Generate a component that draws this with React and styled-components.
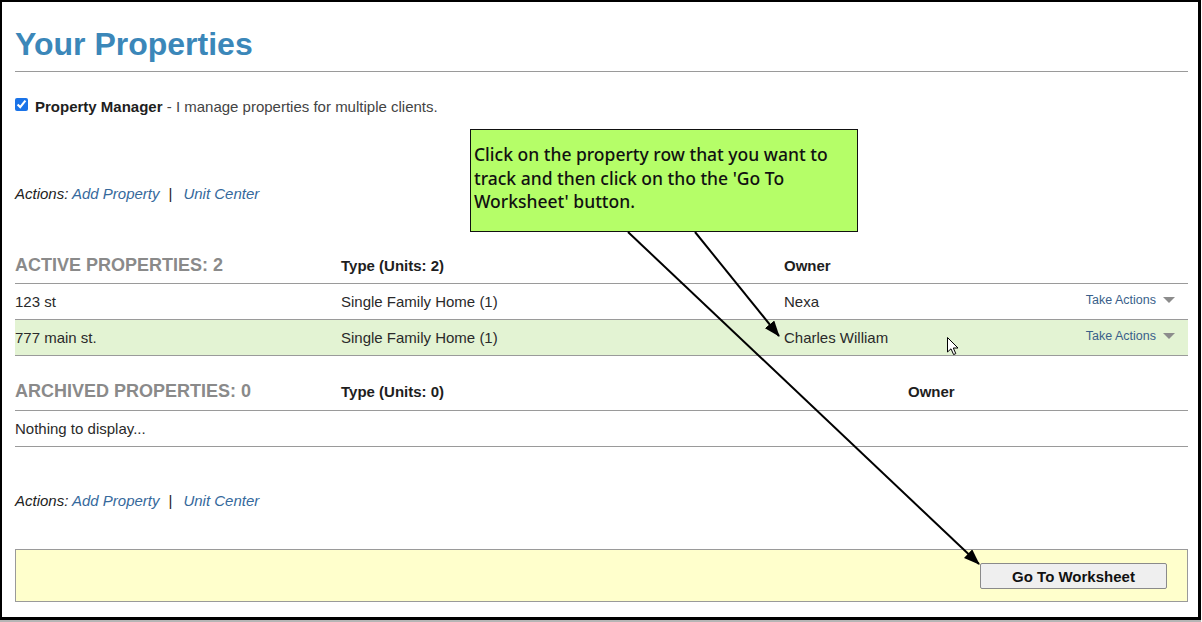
import React from "react";
import styled, { createGlobalStyle } from "styled-components";

const GlobalStyle = createGlobalStyle`
  html, body {
    margin: 0;
    padding: 0;
    background: #fff;
  }
  body {
    font-family: "Liberation Sans", Arial, sans-serif;
    color: #222;
  }
`;

const active = [
  { name: "123 st", type: "Single Family Home (1)", owner: "Nexa" },
  { name: "777 main st.", type: "Single Family Home (1)", owner: "Charles William", selected: true },
];

export default function App() {
  return (
    <Page>
      <GlobalStyle />
      <Frame>
        <Content>
          <Title>Your Properties</Title>
          <Rule />
          <ManagerRow>
            <Check type="checkbox" checked readOnly />
            <span>
              <b>Property Manager</b> - I manage properties for multiple clients.
            </span>
          </ManagerRow>
          <ActionsBar top={70}>
            <em>Actions:</em> <LinkText>Add Property</LinkText>
            <Pipe>|</Pipe>
            <LinkText>Unit Center</LinkText>
          </ActionsBar>

          <Section top={52}>
            <HeaderRow columns="326px 443px 1fr 110px" pad={6}>
              <SectionTitle>Active Properties: 2</SectionTitle>
              <ColHead>Type (Units: 2)</ColHead>
              <ColHead>Owner</ColHead>
              <span />
            </HeaderRow>
            {active.map((p) => (
              <Row key={p.name} columns="326px 443px 1fr 110px" selected={p.selected}>
                <span>{p.name}</span>
                <span>{p.type}</span>
                <span>{p.owner}</span>
                <TakeActions>
                  Take Actions <Caret />
                </TakeActions>
              </Row>
            ))}
          </Section>

          <Section top={24}>
            <HeaderRow columns="326px 567px 1fr" pad={7}>
              <SectionTitle>Archived Properties: 0</SectionTitle>
              <ColHead>Type (Units: 0)</ColHead>
              <ColHead>Owner</ColHead>
            </HeaderRow>
            <Row columns="1fr">
              <span>Nothing to display...</span>
            </Row>
          </Section>

          <ActionsBar top={45}>
            <em>Actions:</em> <LinkText>Add Property</LinkText>
            <Pipe>|</Pipe>
            <LinkText>Unit Center</LinkText>
          </ActionsBar>

          <Footer>
            <Button>Go To Worksheet</Button>
          </Footer>
        </Content>
      </Frame>

      <Callout>
        Click on the property row that you want to
        <br />
        track and then click on tho the 'Go To
        <br />
        Worksheet' button.
      </Callout>

      <Overlay width="1202" height="622" viewBox="0 0 1202 622">
        <defs>
          <marker id="head" markerWidth="8" markerHeight="6" refX="7.5" refY="3" orient="auto" markerUnits="strokeWidth">
            <path d="M0,0 L8,3 L0,6 Z" fill="#000" />
          </marker>
        </defs>
        <line x1="628" y1="232" x2="979" y2="564" stroke="#000" strokeWidth="2" markerEnd="url(#head)" />
        <line x1="695" y1="232" x2="779" y2="336" stroke="#000" strokeWidth="2" markerEnd="url(#head)" />
        <path
          d="M947.5 337.5 L947.5 352 L951 348.8 L953.6 354.6 L955.8 353.6 L953.3 348 L958 348 Z"
          fill="#fff"
          stroke="#000"
          strokeWidth="1"
          strokeLinejoin="round"
        />
      </Overlay>
    </Page>
  );
}

const Page = styled.div`
  position: relative;
  width: 1202px;
  height: 622px;
  overflow: hidden;
`;

const Frame = styled.div`
  box-sizing: border-box;
  width: 1201px;
  height: 620px;
  border-style: solid;
  border-color: #000;
  border-width: 2px 3px 3px 2px;
  box-shadow: 0 2px 0 #b5b5b5;
  background: #fff;
`;

const Content = styled.div`
  padding: 24px 10px 0 13px;
`;

const Title = styled.h1`
  margin: 0;
  font-size: 32px;
  line-height: 36px;
  font-weight: bold;
  color: #3b87b9;
`;

const Rule = styled.div`
  margin-top: 9px;
  border-top: 1px solid #9a9a9a;
`;

const ManagerRow = styled.label`
  display: flex;
  align-items: flex-start;
  gap: 7px;
  margin-top: 26px;
  font-size: 15px;
  line-height: 17px;
  color: #444;
  b {
    color: #1e1e1e;
  }
`;

const Check = styled.input`
  width: 13px;
  height: 13px;
  margin: 0;
  accent-color: #1a73e8;
`;

const ActionsBar = styled.div`
  margin-top: ${(p) => p.top}px;
  font-size: 15px;
  line-height: 17px;
  font-style: italic;
  color: #222;
`;

const LinkText = styled.span`
  color: #35699c;
`;

const Pipe = styled.span`
  font-style: normal;
  color: #222;
  margin: 0 11px 0 9px;
`;

const Section = styled.div`
  margin-top: ${(p) => p.top}px;
`;

const HeaderRow = styled.div`
  display: grid;
  grid-template-columns: ${(p) => p.columns};
  align-items: baseline;
  padding-bottom: ${(p) => p.pad}px;
  line-height: 22px;
  border-bottom: 1px solid #9a9a9a;
`;

const SectionTitle = styled.span`
  font-size: 18px;
  font-weight: bold;
  text-transform: uppercase;
  color: #8a8a8a;
`;

const ColHead = styled.span`
  font-size: 15px;
  font-weight: bold;
  color: #1e1e1e;
`;

const Row = styled.div`
  display: grid;
  grid-template-columns: ${(p) => p.columns};
  align-items: center;
  height: 35px;
  font-size: 15px;
  line-height: 17px;
  color: #2a2a2a;
  background: ${(p) => (p.selected ? "#e3f3d3" : "transparent")};
  border-bottom: 1px solid #9a9a9a;
`;

const TakeActions = styled.span`
  display: flex;
  align-items: center;
  justify-content: flex-end;
  gap: 7px;
  padding-right: 13px;
  margin-top: -3px;
  font-size: 12.5px;
  color: #3a5f8a;
`;

const Caret = styled.i`
  width: 0;
  height: 0;
  border-left: 6px solid transparent;
  border-right: 6px solid transparent;
  border-top: 6px solid #8c8c8c;
`;

const Footer = styled.div`
  display: flex;
  justify-content: flex-end;
  margin-top: 40px;
  padding: 13px 20px 12px 0;
  background: #ffffcc;
  border: 1px solid #9a9a9a;
`;

const Button = styled.button`
  width: 187px;
  height: 26px;
  padding: 0;
  font-family: "Liberation Sans", Arial, sans-serif;
  font-size: 15px;
  font-weight: bold;
  color: #111;
  background: #efefef;
  border: 1px solid #8a8a8a;
  border-radius: 2px;
`;

const Callout = styled.div`
  position: absolute;
  left: 470px;
  top: 129px;
  box-sizing: border-box;
  width: 388px;
  height: 103px;
  padding: 13px 3px 0;
  background: #b5fe68;
  border: 1px solid #111;
  font-family: "Noto Sans", "Open Sans", sans-serif;
  font-size: 17.5px;
  font-weight: 500;
  line-height: 23.6px;
  color: #111;
`;

const Overlay = styled.svg`
  position: absolute;
  left: 0;
  top: 0;
  pointer-events: none;
`;
